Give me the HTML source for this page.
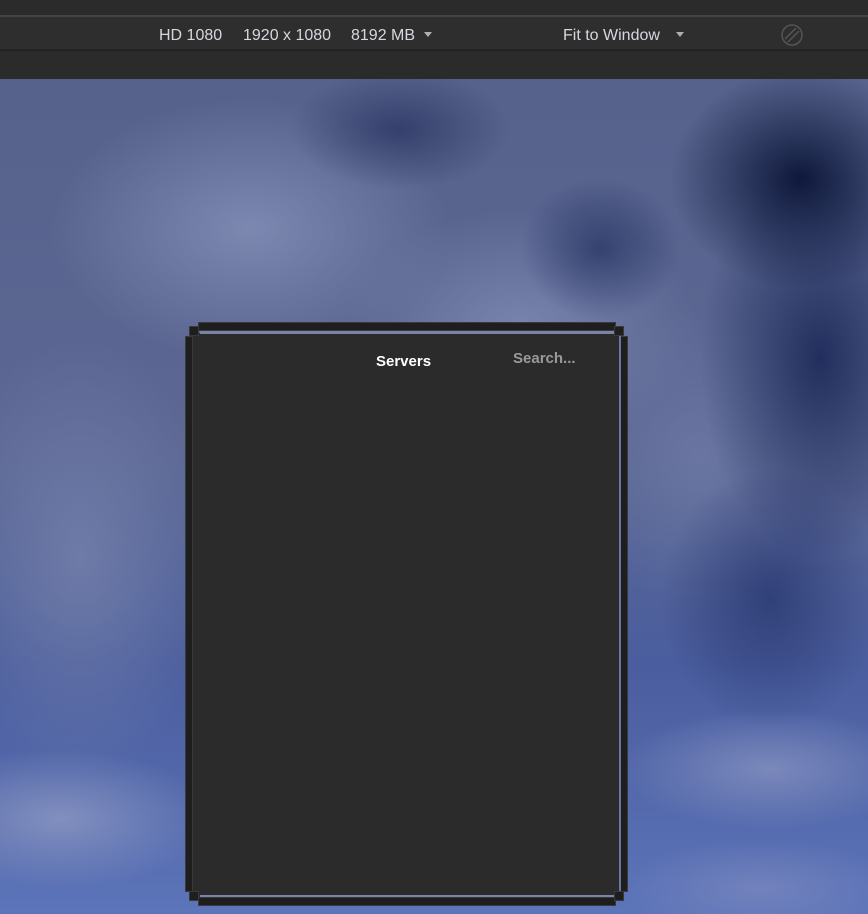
<!DOCTYPE html>
<html><head><meta charset="utf-8"><style>
*{margin:0;padding:0;box-sizing:border-box}
body{width:868px;height:914px;overflow:hidden;background:#2b2b2b;font-family:"Liberation Sans",sans-serif;position:relative}
.sky{position:absolute;left:0;top:79px;width:868px;height:835px;
background:
radial-gradient(ellipse 130px 110px at 800px 100px,rgba(10,20,55,.95),rgba(10,20,55,0)),
radial-gradient(ellipse 120px 200px at 820px 280px,rgba(20,32,80,.8),rgba(20,32,80,0)),
radial-gradient(ellipse 80px 70px at 600px 170px,rgba(30,42,90,.65),rgba(30,42,90,0)),
radial-gradient(ellipse 110px 60px at 400px 50px,rgba(30,40,85,.6),rgba(30,40,85,0)),
radial-gradient(ellipse 110px 130px at 770px 520px,rgba(35,50,105,.7),rgba(35,50,105,0)),
radial-gradient(ellipse 200px 130px at 250px 150px,rgba(128,140,180,.9),rgba(128,140,180,0)),
radial-gradient(ellipse 180px 120px at 520px 250px,rgba(125,137,178,.85),rgba(125,137,178,0)),
radial-gradient(ellipse 140px 220px at 80px 480px,rgba(115,127,170,.85),rgba(115,127,170,0)),
radial-gradient(ellipse 120px 150px at 700px 380px,rgba(115,127,170,.6),rgba(115,127,170,0)),
radial-gradient(ellipse 150px 70px at 60px 740px,rgba(135,147,192,.9),rgba(135,147,192,0)),
radial-gradient(ellipse 150px 60px at 770px 690px,rgba(130,142,190,.85),rgba(130,142,190,0)),
radial-gradient(ellipse 140px 50px at 760px 810px,rgba(120,134,190,.8),rgba(120,134,190,0)),
linear-gradient(#56628c 0%,#5c6893 45%,#4a5d9e 70%,#5c74b9 100%);}
.bar1{position:absolute;left:0;top:15px;width:868px;height:2px;background:#444}
.bar{position:absolute;left:0;top:17px;width:868px;height:34px;background:#2e2e2e;border-bottom:2px solid #222}
.bar span{position:absolute;top:10px;color:#d4d8de;font-size:16px}
.tri{position:absolute;top:15px;width:0;height:0;border-left:4px solid transparent;border-right:4px solid transparent;border-top:5px solid #b0b0b0}
.panel{position:absolute;left:191px;top:333px;width:430px;height:564px;background:#2b2b2b}
.rail{position:absolute;background:#1e1e1e;border:1px solid #3a3a3a}
.t{position:absolute;font-weight:bold;font-family:"Liberation Sans",sans-serif}
</style></head><body>
<div class="sky"></div>
<div class="bar1"></div>
<div class="bar">
<span style="left:159px">HD 1080</span>
<span style="left:243px">1920 x 1080</span>
<span style="left:351px">8192 MB</span>
<div class="tri" style="left:424px"></div>
<span style="left:563px">Fit to Window</span>
<div class="tri" style="left:676px"></div>
<svg style="position:absolute;left:780px;top:6px" width="24" height="24" viewBox="0 0 24 24" fill="none" stroke="#555" stroke-width="1.5"><circle cx="12" cy="12" r="10"/><path d="M5 16L16 5M8 19L19 8"/></svg>
</div>
<div class="panel"></div>
<div class="rail" style="left:198px;top:322px;width:418px;height:9px"></div>
<div style="position:absolute;left:200px;top:331px;width:414px;height:3px;background:#7b84a8"></div>
<div class="rail" style="left:198px;top:897px;width:418px;height:9px"></div>
<div style="position:absolute;left:200px;top:895px;width:414px;height:2px;background:#7b84a8"></div>
<div class="rail" style="left:185px;top:336px;width:8px;height:556px"></div>
<div class="rail" style="left:620px;top:336px;width:8px;height:556px"></div>
<div style="position:absolute;left:619px;top:336px;width:2px;height:556px;background:#6a74a0"></div>
<div class="rail" style="left:189px;top:326px;width:10px;height:10px"></div>
<div class="rail" style="left:614px;top:326px;width:10px;height:10px"></div>
<div class="rail" style="left:189px;top:891px;width:10px;height:10px"></div>
<div class="rail" style="left:614px;top:891px;width:10px;height:10px"></div>
<div class="t" style="left:376px;top:353px;font-size:15px;color:#fff">Servers</div>
<div class="t" style="left:513px;top:350px;font-size:15px;color:#9a9a9a">Search...</div>
</body></html>
